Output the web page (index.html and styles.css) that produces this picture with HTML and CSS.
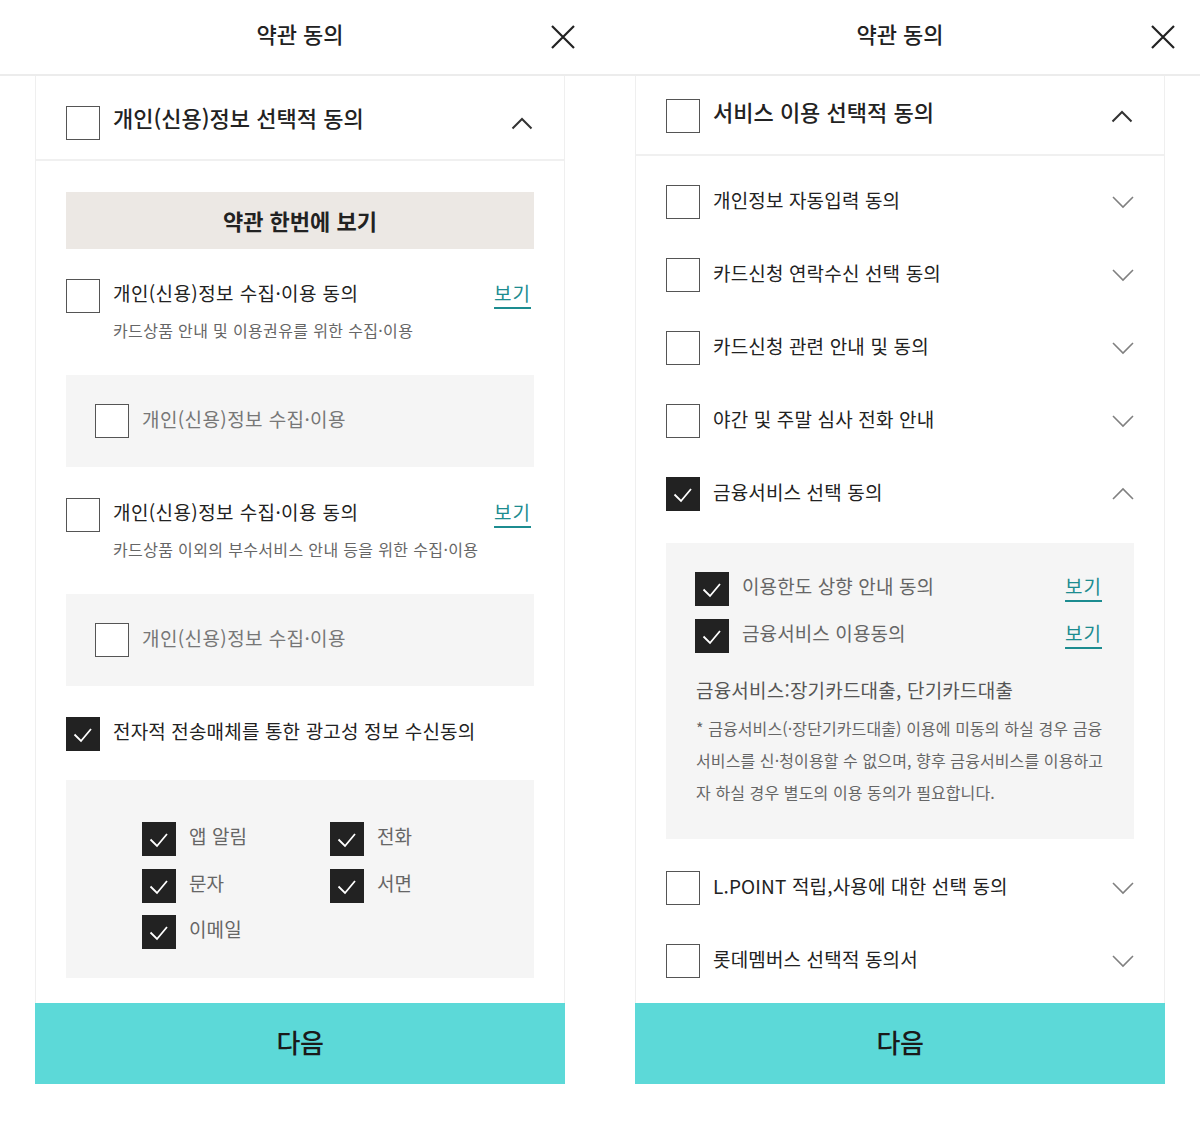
FILE: index.html
```html
<!DOCTYPE html>
<html lang="ko">
<head>
<meta charset="utf-8">
<title>약관 동의</title>
<link rel="stylesheet" href="styles.css">
</head>
<body>
<div class="screens">

  <!-- LEFT SCREEN -->
  <section class="panel">
    <header class="topbar">
      <span></span>
      <h1 class="topbar-title">약관 동의</h1>
      <button class="close" aria-label="닫기">
        <svg viewBox="0 0 24 24" width="24" height="24"><path d="M1 1 L23 23 M23 1 L1 23" stroke="#222" stroke-width="2.2" fill="none"/></svg>
      </button>
    </header>
    <div class="content">
      <div class="card">
        <div class="card-head head-left">
          <span class="cb"></span>
          <span class="head-title">개인(신용)정보 선택적 동의</span>
          <svg class="chev" viewBox="0 0 22 34" width="22" height="34"><polyline points="1.5,22.5 11,13 20.5,22.5" stroke="#333" stroke-width="2" fill="none"/></svg>
        </div>
        <div class="card-body body-left">
          <button class="view-all">약관 한번에 보기</button>

          <div class="item">
            <span class="cb"></span>
            <div class="item-text">
              <p class="item-title">개인(신용)정보 수집·이용 동의</p>
              <p class="item-sub">카드상품 안내 및 이용권유를 위한 수집·이용</p>
            </div>
            <a class="view" href="#">보기</a>
          </div>
          <div class="subbox">
            <span class="cb"></span>
            <span class="sub-label">개인(신용)정보 수집·이용</span>
          </div>

          <div class="item after-box">
            <span class="cb"></span>
            <div class="item-text">
              <p class="item-title">개인(신용)정보 수집·이용 동의</p>
              <p class="item-sub">카드상품 이외의 부수서비스 안내 등을 위한 수집·이용</p>
            </div>
            <a class="view" href="#">보기</a>
          </div>
          <div class="subbox">
            <span class="cb"></span>
            <span class="sub-label">개인(신용)정보 수집·이용</span>
          </div>

          <div class="item after-box">
            <span class="cb on"><svg viewBox="0 0 34 34" width="34" height="34"><polyline points="8.5,17.5 15,24 25,12" stroke="#fff" stroke-width="1.8" fill="none"/></svg></span>
            <div class="item-text">
              <p class="item-title plain">전자적 전송매체를 통한 광고성 정보 수신동의</p>
            </div>
          </div>
          <div class="optbox">
            <div class="opt"><span class="cb on"><svg viewBox="0 0 34 34" width="34" height="34"><polyline points="8.5,17.5 15,24 25,12" stroke="#fff" stroke-width="1.8" fill="none"/></svg></span><span class="opt-label">앱 알림</span></div>
            <div class="opt"><span class="cb on"><svg viewBox="0 0 34 34" width="34" height="34"><polyline points="8.5,17.5 15,24 25,12" stroke="#fff" stroke-width="1.8" fill="none"/></svg></span><span class="opt-label">전화</span></div>
            <div class="opt"><span class="cb on"><svg viewBox="0 0 34 34" width="34" height="34"><polyline points="8.5,17.5 15,24 25,12" stroke="#fff" stroke-width="1.8" fill="none"/></svg></span><span class="opt-label">문자</span></div>
            <div class="opt"><span class="cb on"><svg viewBox="0 0 34 34" width="34" height="34"><polyline points="8.5,17.5 15,24 25,12" stroke="#fff" stroke-width="1.8" fill="none"/></svg></span><span class="opt-label">서면</span></div>
            <div class="opt"><span class="cb on"><svg viewBox="0 0 34 34" width="34" height="34"><polyline points="8.5,17.5 15,24 25,12" stroke="#fff" stroke-width="1.8" fill="none"/></svg></span><span class="opt-label">이메일</span></div>
          </div>
        </div>
      </div>
    </div>
    <button class="next">다음</button>
  </section>

  <!-- RIGHT SCREEN -->
  <section class="panel">
    <header class="topbar">
      <span></span>
      <h1 class="topbar-title">약관 동의</h1>
      <button class="close" aria-label="닫기">
        <svg viewBox="0 0 24 24" width="24" height="24"><path d="M1 1 L23 23 M23 1 L1 23" stroke="#222" stroke-width="2.2" fill="none"/></svg>
      </button>
    </header>
    <div class="content">
      <div class="card">
        <div class="card-head head-right">
          <span class="cb"></span>
          <span class="head-title">서비스 이용 선택적 동의</span>
          <svg class="chev" viewBox="0 0 22 34" width="22" height="34"><polyline points="1.5,22.5 11,13 20.5,22.5" stroke="#333" stroke-width="2" fill="none"/></svg>
        </div>
        <div class="card-body body-right">
          <div class="row">
            <span class="cb"></span>
            <span class="row-title">개인정보 자동입력 동의</span>
            <svg class="chev" viewBox="0 0 22 34" width="22" height="34"><polyline points="1,12 11,22 21,12" stroke="#808080" stroke-width="1.6" fill="none"/></svg>
          </div>
          <div class="row">
            <span class="cb"></span>
            <span class="row-title">카드신청 연락수신 선택 동의</span>
            <svg class="chev" viewBox="0 0 22 34" width="22" height="34"><polyline points="1,12 11,22 21,12" stroke="#808080" stroke-width="1.6" fill="none"/></svg>
          </div>
          <div class="row">
            <span class="cb"></span>
            <span class="row-title">카드신청 관련 안내 및 동의</span>
            <svg class="chev" viewBox="0 0 22 34" width="22" height="34"><polyline points="1,12 11,22 21,12" stroke="#808080" stroke-width="1.6" fill="none"/></svg>
          </div>
          <div class="row">
            <span class="cb"></span>
            <span class="row-title">야간 및 주말 심사 전화 안내</span>
            <svg class="chev" viewBox="0 0 22 34" width="22" height="34"><polyline points="1,12 11,22 21,12" stroke="#808080" stroke-width="1.6" fill="none"/></svg>
          </div>
          <div class="row">
            <span class="cb on"><svg viewBox="0 0 34 34" width="34" height="34"><polyline points="8.5,17.5 15,24 25,12" stroke="#fff" stroke-width="1.8" fill="none"/></svg></span>
            <span class="row-title">금융서비스 선택 동의</span>
            <svg class="chev" viewBox="0 0 22 34" width="22" height="34"><polyline points="1,22 11,12 21,22" stroke="#808080" stroke-width="1.6" fill="none"/></svg>
          </div>

          <div class="finbox">
            <div class="fin-row">
              <span class="cb on"><svg viewBox="0 0 34 34" width="34" height="34"><polyline points="8.5,17.5 15,24 25,12" stroke="#fff" stroke-width="1.8" fill="none"/></svg></span>
              <span class="fin-label">이용한도 상향 안내 동의</span>
              <a class="view" href="#">보기</a>
            </div>
            <div class="fin-row">
              <span class="cb on"><svg viewBox="0 0 34 34" width="34" height="34"><polyline points="8.5,17.5 15,24 25,12" stroke="#fff" stroke-width="1.8" fill="none"/></svg></span>
              <span class="fin-label">금융서비스 이용동의</span>
              <a class="view" href="#">보기</a>
            </div>
            <p class="fin-title">금융서비스:장기카드대출, 단기카드대출</p>
            <p class="fin-note">* 금융서비스(·장단기카드대출) 이용에 미동의 하실 경우 금융<br>서비스를 신·청이용할 수 없으며, 향후 금융서비스를 이용하고<br>자 하실 경우 별도의 이용 동의가 필요합니다.</p>
          </div>

          <div class="row after-fin">
            <span class="cb"></span>
            <span class="row-title">L.POINT 적립,사용에 대한 선택 동의</span>
            <svg class="chev" viewBox="0 0 22 34" width="22" height="34"><polyline points="1,12 11,22 21,12" stroke="#808080" stroke-width="1.6" fill="none"/></svg>
          </div>
          <div class="row">
            <span class="cb"></span>
            <span class="row-title">롯데멤버스 선택적 동의서</span>
            <svg class="chev" viewBox="0 0 22 34" width="22" height="34"><polyline points="1,12 11,22 21,12" stroke="#808080" stroke-width="1.6" fill="none"/></svg>
          </div>
        </div>
      </div>
    </div>
    <button class="next">다음</button>
  </section>

</div>
</body>
</html>
```

FILE: styles.css
```css
* { box-sizing: border-box; }

html, body {
  margin: 0;
  padding: 0;
  background: #fff;
}

body {
  font-family: "Noto Sans CJK KR", "Noto Sans", sans-serif;
  color: #222;
}

p { margin: 0; }

.screens {
  display: flex;
  width: 1200px;
}

.panel {
  width: 600px;
  height: 1128px;
  display: flex;
  flex-direction: column;
}

/* top bar */
.topbar {
  height: 76px;
  flex: 0 0 76px;
  border-bottom: 2px solid #ececec;
  display: grid;
  grid-template-columns: 1fr auto 1fr;
  align-items: center;
}

.topbar-title {
  margin: 0;
  padding-bottom: 8px;
  font-size: 22px;
  font-weight: 500;
  letter-spacing: 0;
  line-height: 30px;
  color: #222;
}

.close {
  justify-self: end;
  margin-right: 25px;
  padding: 0;
  border: 0;
  background: none;
  width: 24px;
  height: 24px;
  display: flex;
}

/* content */
.content {
  height: 927px;
  flex: 0 0 927px;
  overflow: hidden;
  padding: 0 35px;
}

.card {
  height: 100%;
  border-left: 1px solid #efefef;
  border-right: 1px solid #efefef;
  background: #fff;
}

.card-head {
  display: flex;
  align-items: flex-start;
  gap: 13px;
  padding: 30px 31px 0 30px;
  border-bottom: 2px solid #f0f0f0;
}

.head-left { height: 85px; }
.head-right { height: 80px; padding-top: 23px; }

.head-title {
  font-size: 22px;
  line-height: 22px;
  letter-spacing: 0;
  font-weight: 500;
  color: #222;
}

.head-right .head-title { line-height: 24px; }

.chev {
  margin-left: auto;
  flex: 0 0 22px;
  display: block;
}

/* checkbox */
.cb {
  flex: 0 0 34px;
  width: 34px;
  height: 34px;
  border: 1px solid #555;
  background: #fff;
  display: block;
}

.cb.on {
  background: #222;
  border-color: #222;
}

.cb.on svg {
  display: block;
  margin: -1px;
}

/* left body */
.card-body {
  padding: 31px 30px 0 30px;
}

.body-right {
  padding-top: 29px;
}

.view-all {
  display: block;
  width: 100%;
  height: 57px;
  border: 0;
  background: #ece8e4;
  font-family: inherit;
  font-size: 22px;
  font-weight: 700;
  letter-spacing: 0;
  color: #222;
  padding-bottom: 2px;
}

.item {
  display: flex;
  align-items: flex-start;
  gap: 13px;
  margin-top: 30px;
}

.item.after-box { margin-top: 31px; }

.item-text { flex: 1; }

.item-title {
  font-size: 19px;
  line-height: 28px;
  letter-spacing: 0.4px;
  color: #222;
}

.item-title.plain { letter-spacing: 0.15px; }

.item-sub {
  margin-top: 11px;
  font-size: 16px;
  line-height: 24px;
  letter-spacing: 0.35px;
  color: #666;
}

.view {
  margin-right: 3px;
  font-size: 19px;
  line-height: 28px;
  letter-spacing: 1px;
  color: #1c8c90;
  text-decoration: underline;
  text-decoration-thickness: 1.5px;
  text-underline-offset: 6px;
  white-space: nowrap;
}

.item .view { margin-left: auto; }

.subbox {
  margin-top: 33px;
  background: #f5f5f5;
  padding: 29px;
  display: flex;
  align-items: flex-start;
  gap: 13px;
}

.sub-label,
.opt-label,
.fin-label {
  font-size: 19px;
  line-height: 30px;
  letter-spacing: 0.4px;
  color: #777;
}

.item + .optbox { margin-top: 29px; }

.optbox {
  background: #f5f5f5;
  padding: 42px 0 29px 76px;
  display: grid;
  grid-template-columns: 188px 188px;
  row-gap: 12.5px;
}

.opt {
  display: flex;
  align-items: flex-start;
  gap: 13px;
}

.opt-label { line-height: 28px; color: #666; letter-spacing: 0.1px; }

/* right body */
.row {
  display: flex;
  align-items: flex-start;
  gap: 13px;
  margin-top: 39px;
}

.row:first-child { margin-top: 0; }
.row.after-fin { margin-top: 32px; }

.row-title {
  font-size: 19px;
  line-height: 30px;
  letter-spacing: 0.15px;
  color: #222;
}

.finbox {
  margin-top: 32px;
  background: #f5f5f5;
  padding: 29px 29px 31px 29px;
}

.fin-row {
  display: flex;
  align-items: flex-start;
  gap: 13px;
}

.fin-row + .fin-row { margin-top: 13px; }

.fin-label { line-height: 28px; color: #666; letter-spacing: 0.1px; }

.fin-row .view { margin-left: auto; }

.fin-title {
  margin-top: 23px;
  padding-left: 1px;
  font-size: 19px;
  line-height: 28px;
  letter-spacing: 0.2px;
  color: #555;
}

.fin-note {
  margin-top: 8px;
  padding-left: 1px;
  font-size: 16px;
  line-height: 32px;
  letter-spacing: 0.1px;
  color: #666;
  white-space: nowrap;
}

/* next button */
.next {
  flex: 0 0 81px;
  height: 81px;
  margin: 0 35px;
  border: 0;
  background: #5cd9d8;
  font-family: inherit;
  font-size: 26px;
  font-weight: 500;
  letter-spacing: -0.5px;
  color: #1a1a1a;
  padding-bottom: 6px;
}
```
